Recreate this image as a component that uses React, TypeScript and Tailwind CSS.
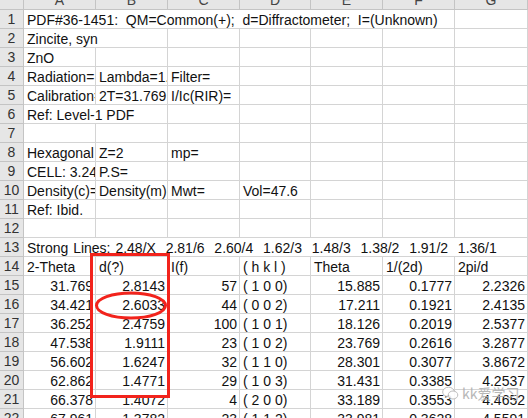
import React from 'react';

type Cell = { t?: string; span?: number; right?: boolean; wide?: boolean };

const L = (t: string, span = 1): Cell => ({ t, span });
const R = (t: string): Cell => ({ t, right: true });
const E: Cell = {};

const rows: Cell[][] = [
  [L('PDF#36-1451:  QM=Common(+);  d=Diffractometer;  I=(Unknown)', 6), E],
  [L('Zincite, syn', 2), E, E, E, E, E],
  [L('ZnO'), E, E, E, E, E, E],
  [L('Radiation='), L('Lambda=1.54056'), L('Filter='), E, E, E, E],
  [L('Calibration='), L('2T=31.769'), L('I/Ic(RIR)='), E, E, E, E],
  [L('Ref: Level-1 PDF', 2), E, E, E, E, E],
  [E, E, E, E, E, E, E],
  [L('Hexagonal'), L('Z=2'), L('mp='), E, E, E, E],
  [L('CELL: 3.2498'), L('P.S='), E, E, E, E, E],
  [L('Density(c)='), L('Density(m)='), L('Mwt='), L('Vol=47.6'), E, E, E],
  [L('Ref: Ibid.'), E, E, E, E, E, E],
  [E, E, E, E, E, E, E],
  [{ ...L('Strong Lines: 2.48/X  2.81/6  2.60/4  1.62/3  1.48/3  1.38/2  1.91/2  1.36/1', 7), wide: true }],
  [L('2-Theta'), L('d(?)'), L('I(f)'), L('( h k l )'), L('Theta'), L('1/(2d)'), L('2pi/d')],
];

const data = [
  ['31.769', '2.8143', '57', '( 1 0 0)', '15.885', '0.1777', '2.2326'],
  ['34.421', '2.6033', '44', '( 0 0 2)', '17.211', '0.1921', '2.4135'],
  ['36.252', '2.4759', '100', '( 1 0 1)', '18.126', '0.2019', '2.5377'],
  ['47.538', '1.9111', '23', '( 1 0 2)', '23.769', '0.2616', '3.2877'],
  ['56.602', '1.6247', '32', '( 1 1 0)', '28.301', '0.3077', '3.8672'],
  ['62.862', '1.4771', '29', '( 1 0 3)', '31.431', '0.3385', '4.2537'],
  ['66.378', '1.4072', '4', '( 2 0 0)', '33.189', '0.3553', '4.4652'],
  ['67.961', '1.3782', '23', '( 1 1 2)', '33.981', '0.3628', '4.5591'],
];

data.forEach((d) => rows.push(d.map((v, i) => (i === 3 ? L(v) : R(v)))));

const cols = ['A', 'B', 'C', 'D', 'E', 'F', 'G'];

const App = () => {
  return (
    <div className="relative w-[528px] h-[418px] overflow-hidden bg-white text-[#111] font-['Liberation_Sans',Arial,sans-serif]">
      <div className="mt-[-9px] grid grid-cols-[24px_72px_72px_72px_71px_72px_72px_73px] auto-rows-[19px]">
        {/* column headers */}
        <div className="bg-[#e6e6e6] border-r border-b border-[#c4c4c4]" />
        {cols.map((c) => (
          <div
            key={c}
            className="bg-[#e6e6e6] border-r border-b border-[#c4c4c4] text-center text-[14px] leading-[18px] text-[#444]"
          >
            {c}
          </div>
        ))}

        {/* sheet rows */}
        {rows.map((row, ri) => (
          <React.Fragment key={ri}>
            <div className="bg-[#e6e6e6] border-r border-b border-[#c4c4c4] text-center text-[14px] leading-[19px] text-[#333]">
              {ri + 1}
            </div>
            {row.map((cell, ci) => (
              <div
                key={ci}
                style={{ gridColumn: `span ${cell.span || 1}` }}
                className={`border-r border-b border-[#d4d4d4] overflow-hidden whitespace-pre text-[14px] pt-[1px] leading-[18px] ${
                  cell.right ? 'text-right pr-[2px]' : 'pl-[3px]'
                } ${cell.wide ? '[word-spacing:1px]' : ''}`}
              >
                {cell.t}
              </div>
            ))}
          </React.Fragment>
        ))}
      </div>

      {/* red marks drawn over the sheet */}
      <svg className="absolute left-0 top-0" width="528" height="418">
        <rect x="91.5" y="254.5" width="77" height="142" fill="none" stroke="#f2231c" strokeWidth="3" />
        <ellipse cx="131" cy="305.5" rx="34.5" ry="12.5" fill="none" stroke="#f2231c" strokeWidth="3" />
      </svg>

      {/* watermark */}
      <div className="absolute left-[442px] top-[385px] flex items-center gap-[3px] text-[14px] leading-[16px] text-[#b0b0b0] opacity-90 font-['Noto_Sans_CJK_SC',sans-serif]">
        <svg width="17" height="15" viewBox="0 0 17 15" fill="none" stroke="#b8b8b8" strokeWidth="1">
          <ellipse cx="6.5" cy="6" rx="5.8" ry="4.8" fill="white" />
          <ellipse cx="11" cy="9" rx="4.8" ry="4" fill="white" />
        </svg>
        <span>kk爱学习</span>
      </div>
    </div>
  );
};

export default App;
